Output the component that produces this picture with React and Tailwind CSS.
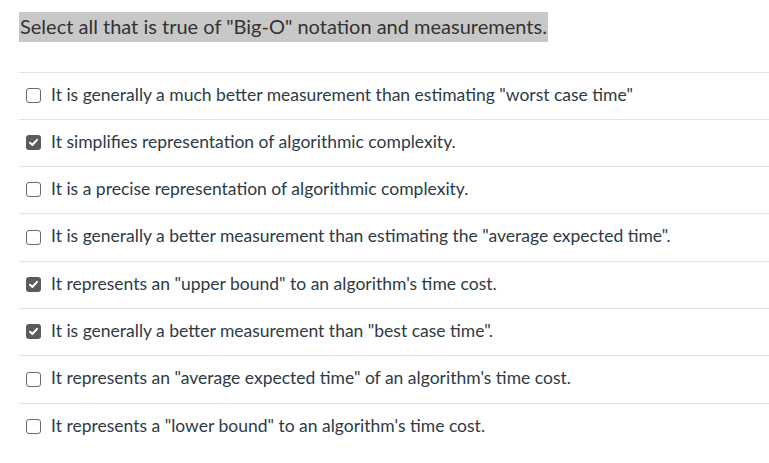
import React from "react";

const items = [
  { t: 'It is generally a much better measurement than estimating "worst case time"', c: false, h: "h-[47px]" },
  { t: "It simplifies representation of algorithmic complexity.", c: true, h: "h-[47px]" },
  { t: "It is a precise representation of algorithmic complexity.", c: false, h: "h-[47px]" },
  { t: 'It is generally a better measurement than estimating the "average expected time".', c: false, h: "h-[48px]" },
  { t: 'It represents an "upper bound" to an algorithm\'s time cost.', c: true, h: "h-[47px]" },
  { t: 'It is generally a better measurement than "best case time".', c: true, h: "h-[47px]" },
  { t: 'It represents an "average expected time" of an algorithm\'s time cost.', c: false, h: "h-[48px]" },
  { t: 'It represents a "lower bound" to an algorithm\'s time cost.', c: false, h: "h-[47px]" },
];

function Box({ checked }) {
  if (checked) {
    return (
      <span className="mb-[1px] flex h-[15px] w-[15px] shrink-0 items-center justify-center rounded-[3px] bg-[#5b5b5b]">
        <svg width="11" height="11" viewBox="0 0 10 10">
          <path d="M1.8 5.2 L4 7.3 L8.2 2.6" fill="none" stroke="white" strokeWidth="1.8" strokeLinecap="round" strokeLinejoin="round" />
        </svg>
      </span>
    );
  }
  return <span className="mb-[1px] h-[15px] w-[15px] shrink-0 rounded-[3px] border-[1.5px] border-[#6a6a6a] bg-white" />;
}

export default function App() {
  return (
    <div className="min-h-[463px] w-[769px] bg-white pl-[19px] pt-[12px] text-[#2d3b45]" style={{ fontFamily: "Lato, 'Open Sans', sans-serif" }}>
      <div className="h-[30px]">
        <span className="inline-block h-[30px] bg-[#c8c8c8] pl-[1px] pr-[1px] text-[20px] leading-[28px] text-[#333]">
          Select all that is true of "Big-O" notation and measurements.
        </span>
      </div>
      <div className="mt-[30px]">
        {items.map((it, i) => (
          <div key={i} className={`flex items-center gap-[10px] border-t border-[#e2e2e2] pl-[7px] ${it.h}`}>
            <Box checked={it.c} />
            <span className="mb-[3px] text-[17.5px] leading-[22px] text-[#2d3b45]">{it.t}</span>
          </div>
        ))}
      </div>
    </div>
  );
}
